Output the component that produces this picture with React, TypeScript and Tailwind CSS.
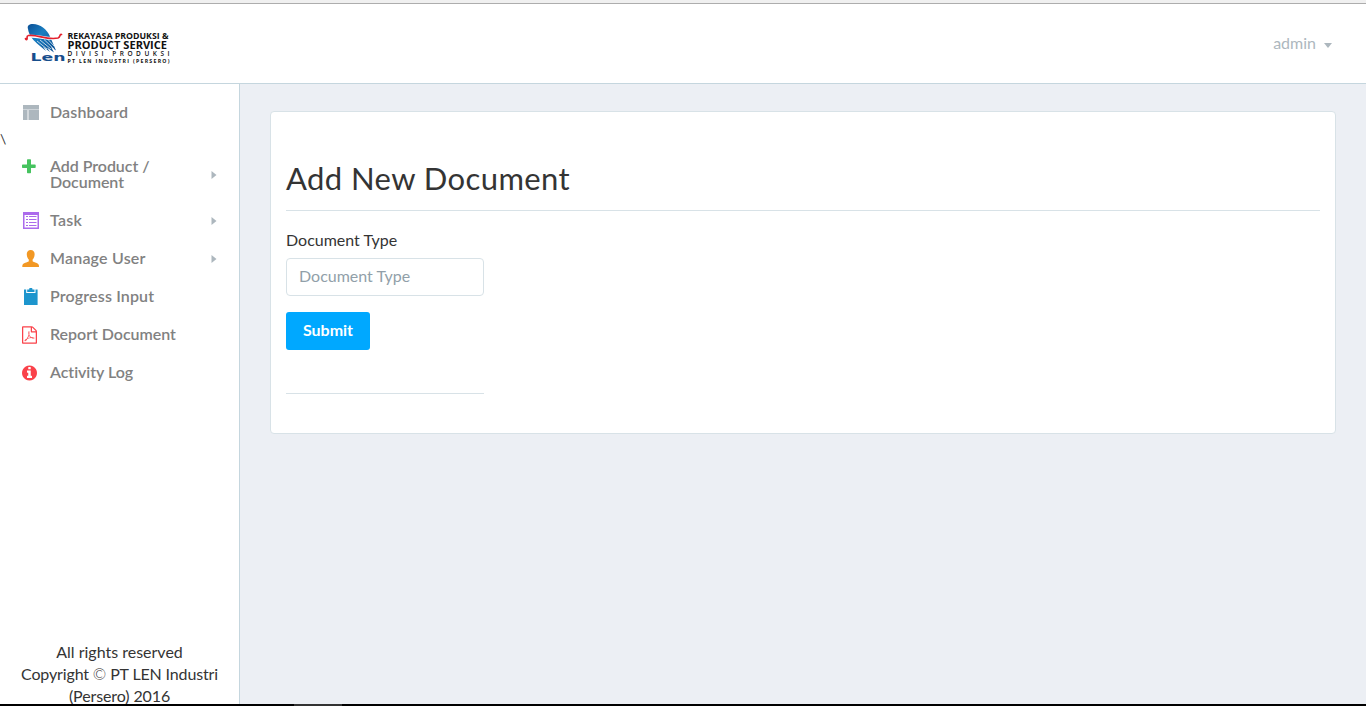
import type { ReactNode } from 'react';

function Logo() {
  return (
    <svg width="150" height="46" viewBox="0 0 150 46" className="block" aria-label="Len">
      <defs>
        <linearGradient id="wing" x1="0" y1="0" x2="1" y2="1">
          <stop offset="0" stopColor="#0b4f95" />
          <stop offset="0.4" stopColor="#1a7fc2" />
          <stop offset="1" stopColor="#0a4a8c" />
        </linearGradient>
      </defs>
      <path
        d="M6 8C5 4.500 7 3 11 3C18 3 25 8 28 15.500L34 29.500L29 26L32 31.500L25 26.500L28 31L21 25.500L24 30L15 22.500C10 18 7 14 6 8Z"
        fill="url(#wing)"
      />
      <path d="M15 20l10 8M18 19l11 9M22 18.500l10 9.500M26 18.500l6 6.500" stroke="#fff" strokeWidth="0.700" />
      <path d="M5 15.500C15 13.500 24 19 37 17" fill="none" stroke="#fff" strokeWidth="3" />
      <path
        d="M6.500 14.500C4 15 5.500 16.500 5 18C4.500 19 3.500 18.500 3.500 17.500M6.500 14.500C15 13 25 19.500 36 17C39 16 37 13 39.500 13.500"
        fill="none"
        stroke="#e3202d"
        strokeWidth="1.700"
        strokeLinecap="round"
      />
      <g fontFamily="'Open Sans', 'Noto Sans', sans-serif" fill="#111">
        <text x="8.500" y="40" fontFamily="'DejaVu Sans', sans-serif" fontWeight="700" fontSize="10.500" fill="#174e8c" textLength="35" lengthAdjust="spacingAndGlyphs">Len</text>
        <text x="45.500" y="18" fontWeight="700" fontSize="9" textLength="101" lengthAdjust="spacingAndGlyphs">REKAYASA PRODUKSI &amp;</text>
        <text x="45.500" y="27.500" fontWeight="700" fontSize="11" textLength="99.500" lengthAdjust="spacingAndGlyphs">PRODUCT SERVICE</text>
        <text x="45.500" y="35.400" fontWeight="600" fontSize="6.500" textLength="102" lengthAdjust="spacing">DIVISI PRODUKSI</text>
        <text x="45.500" y="42" fontWeight="700" fontSize="5.200" textLength="102" lengthAdjust="spacing">PT LEN INDUSTRI (PERSERO)</text>
      </g>
    </svg>
  );
}

function DashboardIcon() {
  return (
    <svg width="18" height="18" viewBox="0 0 18 18" fill="#adb7be">
      <path d="M1 1h16v4H1zM1 6h4.500v10H1zM6.500 6H17v10H6.500z" />
      <path d="M1 5h16v1H1zM5.500 6h1v10h-1z" fill="#cfd5da" />
    </svg>
  );
}

function PlusIcon() {
  return (
    <svg width="18" height="18" viewBox="0 0 18 18" fill="#46c35f">
      <path d="M5 2q0-.7.700-.7h2.600q.7 0 .7.700V6.500h4q.7 0 .7.700v2.100q0 .7-.7.700H9v4.500q0 .7-.7.700H5.700q-.7 0-.7-.7V10H.700Q0 10 0 9.300V7.200q0-.7.700-.7H5z" />
    </svg>
  );
}

function TaskIcon() {
  return (
    <svg width="18" height="18" viewBox="0 1 18 18">
      <path d="M1 1h16v17H1z" fill="#ac6bec" />
      <path d="M2.500 4h13v12.500h-13z" fill="#fff" />
      <path d="M4 5.500h2M7 5.500h7.500M4 8.500h2M7 8.500h7.500M4 11.500h2M7 11.500h7.500M4 14.500h2M7 14.500h7.500" stroke="#ac6bec" />
    </svg>
  );
}

function UserIcon() {
  return (
    <svg width="18" height="18" viewBox="0 1 18 18" fill="#f29824">
      <path d="M8.700 1C11.400 1 12.800 2.900 12.600 5.500C12.500 8 11.600 9.500 10.600 10.500V12.300C12 13.600 16.500 14 16.900 16.200L17 18H.3L.4 16.200C.8 14 5.500 13.600 6.800 12.300V10.500C5.800 9.500 4.900 8 4.800 5.500C4.600 2.900 6 1 8.700 1Z" />
    </svg>
  );
}

function ClipboardIcon() {
  return (
    <svg width="18" height="18" viewBox="0 0 18 18">
      <path d="M2 1.500h13.600V17H2z" fill="#1d95cd" />
      <path d="M4.200 1h9.300v4H4.200z" fill="#fff" />
      <path d="M5.200 1.500h2V.7Q7.200 0 8 0h1.700q.7 0 .7.700v.8h2.100V4H5.200z" fill="#1d95cd" />
    </svg>
  );
}

function PdfIcon() {
  return (
    <svg width="15" height="18" viewBox="0 0 1536 1792" fill="#fa424a">
      <path d="M1468 380q28 28 48 76t20 88v1152q0 40-28 68t-68 28h-1344q-40 0-68-28t-28-68v-1600q0-40 28-68t68-28h896q40 0 88 20t76 48zm-444-244v376h376q-10-29-22-41l-313-313q-12-12-41-22zm384 1528v-1024h-416q-40 0-68-28t-28-68v-416h-768v1536h1280zm-514-593q33 26 84 56 59-7 117-7 147 0 177 49 16 22 2 52 0 1-1 2l-2 2v1q-6 38-71 38-48 0-115-20t-130-53q-221 24-392 83-153 262-242 262-15 0-28-7l-24-12q-1-1-6-5-10-10-6-36 9-40 56-91.500t132-96.500q14-9 23 6 2 2 2 4 52-85 107-197 68-136 104-262-24-82-30.500-159.500t6.500-127.500q11-40 42-40h22q23 0 35 15 18 21 9 68-2 6-4 8 1 3 1 8v30q-2 123-14 192 55 164 146 238zm-576 411q52-24 137-158-51 40-87.500 84t-49.500 74zm398-920q-15 42-2 132 1-7 7-44 0-3 7-43 1-4 4-8-1-1-1-2t-1-2q-1-22-13-36 0 1-1 2v2zm-124 661q135-54 284-81-2-1-13-9.500t-16-13.500q-76-67-127-176-27 86-83 197-30 56-45 83zm646-16q-24-24-140-24 76 28 124 28 14 0 18-1 0-1-2-3z" />
    </svg>
  );
}

function InfoIcon() {
  return (
    <svg width="15" height="18" viewBox="0 0 1536 1792" fill="#fa424a">
      <path d="M1024 1376v-160q0-14-9-23t-23-9h-96v-512q0-14-9-23t-23-9h-320q-14 0-23 9t-9 23v160q0 14 9 23t23 9h96v320h-96q-14 0-23 9t-9 23v160q0 14 9 23t23 9h448q14 0 23-9t9-23zm-128-896v-160q0-14-9-23t-23-9h-192q-14 0-23 9t-9 23v160q0 14 9 23t23 9h192q14 0 23-9t9-23zm640 416q0 209-103 385.500t-279.500 279.500-385.500 103-385.500-103-279.500-279.500-103-385.500 103-385.500 279.500-279.500 385.500-103 385.500 103 279.500 279.500 103 385.500z" />
    </svg>
  );
}

type ItemProps = { icon: ReactNode; label: ReactNode; arrow?: boolean };

function NavItem({ icon, label, arrow }: ItemProps) {
  return (
    <li className="flex items-center px-[22px] pt-[10px] pb-3">
      <span className="h-4 w-7 shrink-0 self-start">{icon}</span>
      <a href="#" className="flex-1 text-base leading-4 font-semibold tracking-[0.06px] text-[#818181]">{label}</a>
      {arrow && (
        <svg width="6" height="8" viewBox="0 0 6 8" fill="#adb7be" className="mt-0.5">
          <path d="M.5 0 5.500 4 .5 8z" />
        </svg>
      )}
    </li>
  );
}

export default function App() {
  return (
    <div className="flex h-[706px] w-[1366px] flex-col overflow-hidden bg-[#eceff4] font-['Lato','Open_Sans',sans-serif] text-base text-[#343434] [font-variant-ligatures:none]">
      <div className="h-1 shrink-0 border-b border-[#adadad] bg-[#f0f0f0]" />
      <header className="flex h-20 shrink-0 items-center justify-between border-b border-[#c5d6de] bg-white pr-[34px] pl-[22px]">
        <Logo />
        <button className="flex items-center gap-2 text-[#adb7be]">
          <span className="pb-px text-base">admin</span>
          <svg width="8" height="5" viewBox="0 0 8 5" fill="#adb7be" className="mt-[3px]">
            <path d="M0 0h8L4 5z" />
          </svg>
        </button>
      </header>
      <div className="flex min-h-0 flex-1">
        <aside className="flex w-60 shrink-0 flex-col border-r border-[#c5d6de] bg-white">
          <ul className="pt-[10px]">
            <NavItem icon={<DashboardIcon />} label={<span className="tracking-[0.15px]">Dashboard</span>} />
            <li className="h-4 text-sm leading-[14px] tracking-tight">\</li>
            <NavItem icon={<PlusIcon />} label={<span className="tracking-[-0.05px]">Add Product /<br />Document</span>} arrow />
            <NavItem icon={<TaskIcon />} label={<span className="tracking-[0.25px]">Task</span>} arrow />
            <NavItem icon={<UserIcon />} label={<span className="tracking-[0.2px]">Manage User</span>} arrow />
            <NavItem icon={<ClipboardIcon />} label={<span className="tracking-[0.15px]">Progress Input</span>} />
            <NavItem icon={<PdfIcon />} label={<span className="tracking-[-0.03px]">Report Document</span>} />
            <NavItem icon={<InfoIcon />} label={<span className="tracking-[-0.05px]">Activity Log</span>} />
          </ul>
          <footer className="mt-auto h-[63px] overflow-visible text-center leading-[22px]">
            <p>All rights reserved</p>
            <p className="tracking-[-0.14px]">Copyright <span className="font-light">©</span> PT LEN Industri</p>
            <p className="tracking-[-0.1px]">(Persero) 2016</p>
          </footer>
        </aside>
        <main className="flex-1 px-[30px] pt-[27px]">
          <section className="h-[323px] rounded-[4px] border border-[#d8e2e7] bg-white px-[15px] pt-[46px]">
            <h1 className="h-[53px] border-b border-[#d8e2e7] text-[31px] leading-[41px] font-normal tracking-[0.42px]">Add New Document</h1>
            <form className="w-[198px] pt-[18px]" onSubmit={(e) => e.preventDefault()}>
              <label htmlFor="type" className="block h-[29px] leading-[22px]">Document Type</label>
              <input
                id="type"
                placeholder="Document Type"
                className="block h-[38px] w-full rounded-[4px] border border-[#d8e2e7] px-3 pb-[3px] placeholder:text-[#919fa9]"
              />
              <button className="mt-4 block h-[38px] w-[84px] rounded-[3px] bg-[#00a8ff] pb-0.5 font-bold text-white">Submit</button>
              <hr className="mt-[43px] border-[#d8e2e7]" />
            </form>
          </section>
        </main>
      </div>
      <div className="z-10 flex h-0.5 shrink-0 bg-black pl-[294px]">
        <div className="w-12 bg-[#333]" />
      </div>
    </div>
  );
}
